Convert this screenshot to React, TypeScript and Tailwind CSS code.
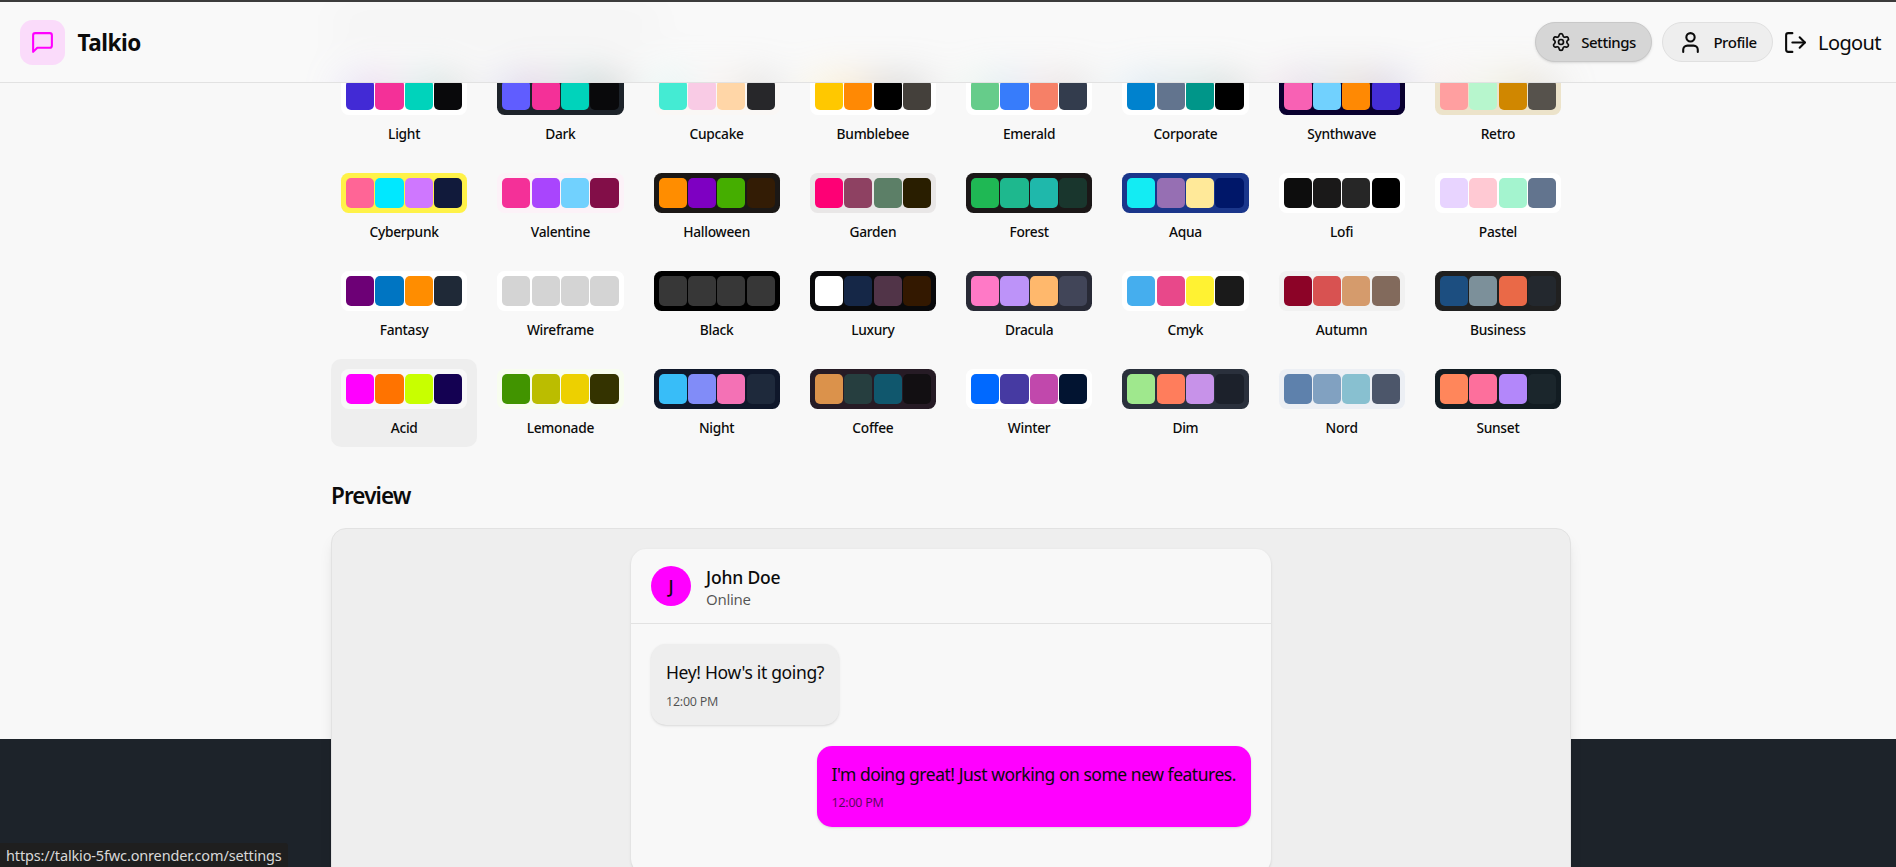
import { LogOut, Settings, User } from "lucide-react";

// base, primary, secondary, accent, neutral
const themes: [string, string, string, string, string, string][] = [
  ["Light", "#ffffff", "#422ad5", "#f43098", "#00d3bb", "#09090b"],
  ["Dark", "#1d232a", "#605dff", "#f43098", "#00d3bb", "#09090b"],
  ["Cupcake", "#faf7f5", "#44ebd3", "#f9cbe5", "#ffd6a7", "#27272a"],
  ["Bumblebee", "#ffffff", "#ffc800", "#ff8904", "#000000", "#44403b"],
  ["Emerald", "#ffffff", "#66cc8a", "#377cfb", "#f68067", "#333c4d"],
  ["Corporate", "#ffffff", "#0082ce", "#62748e", "#009689", "#000000"],
  ["Synthwave", "#09002f", "#f861b4", "#71d1fe", "#ff8903", "#432dd7"],
  ["Retro", "#ece3ca", "#ff9fa0", "#b7f6cd", "#d08700", "#56524c"],
  ["Cyberpunk", "#fff248", "#ff6596", "#00e8ff", "#cf77ff", "#111a3b"],
  ["Valentine", "#fcf2f8", "#f43098", "#a945fd", "#71d1fe", "#820e48"],
  ["Halloween", "#1b1816", "#ff8d00", "#7e00c2", "#45ae00", "#331c05"],
  ["Garden", "#e9e7e7", "#fe0075", "#8e4162", "#5c7f67", "#291e00"],
  ["Forest", "#1b1717", "#1fb854", "#1eb88e", "#1fb8ab", "#19362d"],
  ["Aqua", "#1a368b", "#13ecf3", "#966fb3", "#ffe999", "#001769"],
  ["Lofi", "#ffffff", "#0d0d0d", "#1a1919", "#262626", "#000000"],
  ["Pastel", "#ffffff", "#e8d4ff", "#ffc9d3", "#a4f4cf", "#62748e"],
  ["Fantasy", "#ffffff", "#6d0076", "#0075c2", "#ff8d00", "#1f2937"],
  ["Wireframe", "#ffffff", "#d4d4d4", "#d4d4d4", "#d4d4d4", "#d4d4d4"],
  ["Black", "#000000", "#373737", "#373737", "#373737", "#373737"],
  ["Luxury", "#09090b", "#ffffff", "#152747", "#513448", "#331800"],
  ["Dracula", "#282a36", "#ff79c6", "#bd93f9", "#ffb86c", "#414558"],
  ["Cmyk", "#ffffff", "#45aeee", "#e8488a", "#fff232", "#1a1a1a"],
  ["Autumn", "#f1f1f1", "#8c0327", "#d85251", "#d59b6c", "#826a5c"],
  ["Business", "#202020", "#1c4e80", "#7c909a", "#ea6947", "#23282e"],
  ["Acid", "#f8f8f8", "#ff00ff", "#ff7300", "#c8ff00", "#140152"],
  ["Lemonade", "#f8fdef", "#419400", "#bbbd00", "#edd000", "#343300"],
  ["Night", "#0f172a", "#38bdf8", "#818cf8", "#f471b5", "#1e293b"],
  ["Coffee", "#261b25", "#db924b", "#263e3f", "#10576d", "#120f12"],
  ["Winter", "#ffffff", "#0069ff", "#463aa2", "#c148ac", "#021431"],
  ["Dim", "#2a303c", "#9fe88d", "#ff7d5c", "#c792e9", "#1c212b"],
  ["Nord", "#eceff4", "#5e81ac", "#81a1c1", "#88c0d0", "#4c566a"],
  ["Sunset", "#121c22", "#ff865b", "#fd6f9c", "#b387fa", "#1b262c"],
];

function Swatch({ theme }: { theme: (typeof themes)[number] }) {
  const [, base, ...colors] = theme;
  return (
    <div
      className="grid h-[40px] w-full grid-cols-4 gap-[1.25px] rounded-[7.5px] p-[5px]"
      style={{ background: base }}
    >
      {colors.map((color, i) => (
        <div key={i} className="rounded-[5px]" style={{ background: color }} />
      ))}
    </div>
  );
}

function ThemeButton({ theme }: { theme: (typeof themes)[number] }) {
  return (
    <div
      className={`flex flex-col items-center gap-[8.5px] rounded-[10px] p-[10px] ${
        theme[0] === "Acid" ? "bg-[#eeeeee]" : ""
      }`}
    >
      <Swatch theme={theme} />
      <span className="w-full truncate text-center text-[13.75px] leading-[19.6px] font-medium tracking-[-0.02em]">
        {theme[0]}
      </span>
    </div>
  );
}

// what the frosted header shows of the page scrolled beneath it
function HeaderBackdrop() {
  return (
    <div className="absolute inset-0 pl-[6px] opacity-20 blur-[20px]">
      <div className="relative mx-auto h-full max-w-[1280px] px-[20px]">
        <div className="absolute top-[12px] left-[20px] h-[18px] w-[330px] bg-[#0b0b0b]/20" />
        <div className="grid grid-cols-8 gap-[10px] pt-[73px]">
          {themes.slice(0, 8).map((theme) => (
            <div key={theme[0]} className="px-[10px]">
              <Swatch theme={theme} />
            </div>
          ))}
        </div>
      </div>
    </div>
  );
}

export default function App() {
  return (
    <div className="relative h-screen overflow-hidden bg-[#1d232a] font-['Noto_Sans',sans-serif] text-[#0b0b0b]">
      <div className="h-[739px] bg-[#f8f8f8] pt-[65px] pl-[6px]">
        <div className="mx-auto max-w-[1280px] px-[20px]">
          <div className="grid grid-cols-8 gap-[10px]">
            {themes.map((theme) => (
              <ThemeButton key={theme[0]} theme={theme} />
            ))}
          </div>

          <h3 className="mt-[31px] mb-[14.8px] text-[22.5px] leading-[35px] font-semibold tracking-[-0.04em]">
            Preview
          </h3>
          <div className="overflow-hidden rounded-[15px] border border-[#e2e2e2] bg-[#eeeeee] p-[20px] shadow-lg">
            <div className="mx-auto max-w-[640px] overflow-hidden rounded-[15px] bg-[#f8f8f8] shadow-sm">
              <div className="flex items-center gap-[15px] border-b border-[#e2e2e2] px-[20px] py-[14px]">
                <div className="flex h-[40px] w-[40px] items-center justify-center rounded-full bg-[#ff00ff] text-[17.5px] font-medium">
                  J
                </div>
                <div className="pt-[2px]">
                  <div className="text-[17.5px] leading-[25px] font-medium tracking-[-0.01em]">John Doe</div>
                  <div className="text-[15px] leading-[19px] tracking-[-0.02em] text-[#0b0b0b]/70">Online</div>
                </div>
              </div>
              <div className="flex h-[250px] flex-col gap-[20.5px] p-[20px]">
                <div className="self-start rounded-[15px] bg-[#eeeeee] px-[15px] pt-[16px] pb-[14px] shadow-sm">
                  <p className="text-[17.5px] leading-[25px] tracking-[-0.02em]">Hey! How's it going?</p>
                  <p className="mt-[7.5px] text-[12.5px] leading-[18.75px] tracking-[-0.02em] text-[#0b0b0b]/70">12:00 PM</p>
                </div>
                <div className="self-end rounded-[15px] bg-[#ff00ff] px-[15px] pt-[16px] pb-[14px] shadow-sm">
                  <p className="text-[17.5px] leading-[25px] tracking-[-0.027em]">
                    I'm doing great! Just working on some new features.
                  </p>
                  <p className="mt-[7.5px] text-[12.5px] leading-[18.75px] tracking-[-0.02em] text-[#0b0b0b]/70">12:00 PM</p>
                </div>
              </div>
            </div>
          </div>
        </div>
      </div>

      <header className="absolute top-[2px] right-0 left-0 z-10 flex h-[81px] items-center justify-between overflow-hidden border-b border-[#e2e2e2] bg-[#f9f9f9] pr-[15px] pl-[20px]">
        <HeaderBackdrop />
        <div className="relative flex items-center gap-[12.5px]">
          <div className="flex h-[45px] w-[45px] items-center justify-center rounded-[12.5px] bg-[#ff00ff]/12">
            <svg
              className="h-[25px] w-[25px] text-[#ff00ff]"
              viewBox="0 0 24 24"
              fill="none"
              stroke="currentColor"
              strokeWidth="2"
              strokeLinecap="round"
              strokeLinejoin="round"
            >
              <path d="M21 15a2 2 0 0 1-2 2H7l-4 4V5a2 2 0 0 1 2-2h14a2 2 0 0 1 2 2z" />
            </svg>
          </div>
          <span className="pt-[2px] text-[22.5px] font-bold tracking-[-0.02em]">Talkio</span>
        </div>
        <div className="relative flex items-center gap-[10px]">
          <div className="flex h-[40px] w-[117px] items-center justify-center gap-[10px] rounded-full border border-[#c8c8c8] bg-[#d6d6d6] text-[15px] font-medium tracking-[-0.03em] shadow-sm">
            <Settings className="h-[20px] w-[20px]" />
            Settings
          </div>
          <div className="flex h-[40px] w-[111px] items-center justify-center gap-[10px] rounded-full border border-[#e0e0e0] bg-[#eeeeee] text-[15px] font-medium tracking-[-0.03em]">
            <User className="h-[25px] w-[25px]" />
            Profile
          </div>
          <div className="flex items-center gap-[10px] text-[20px] tracking-[-0.03em]">
            <LogOut className="h-[25px] w-[25px]" />
            <span className="pt-[2px]">Logout</span>
          </div>
        </div>
      </header>

      <div className="absolute top-0 right-0 left-0 z-10 h-[2px] bg-[#3c3c3c]" />

      <div className="absolute bottom-0 left-0 z-10 rounded-tr-[3px] bg-[#1f1f1f] px-[6px] text-[14.5px] leading-[24px] tracking-[-0.01em] text-[#d8d8d8]">
        https://talkio-5fwc.onrender.com/settings
      </div>
    </div>
  );
}
